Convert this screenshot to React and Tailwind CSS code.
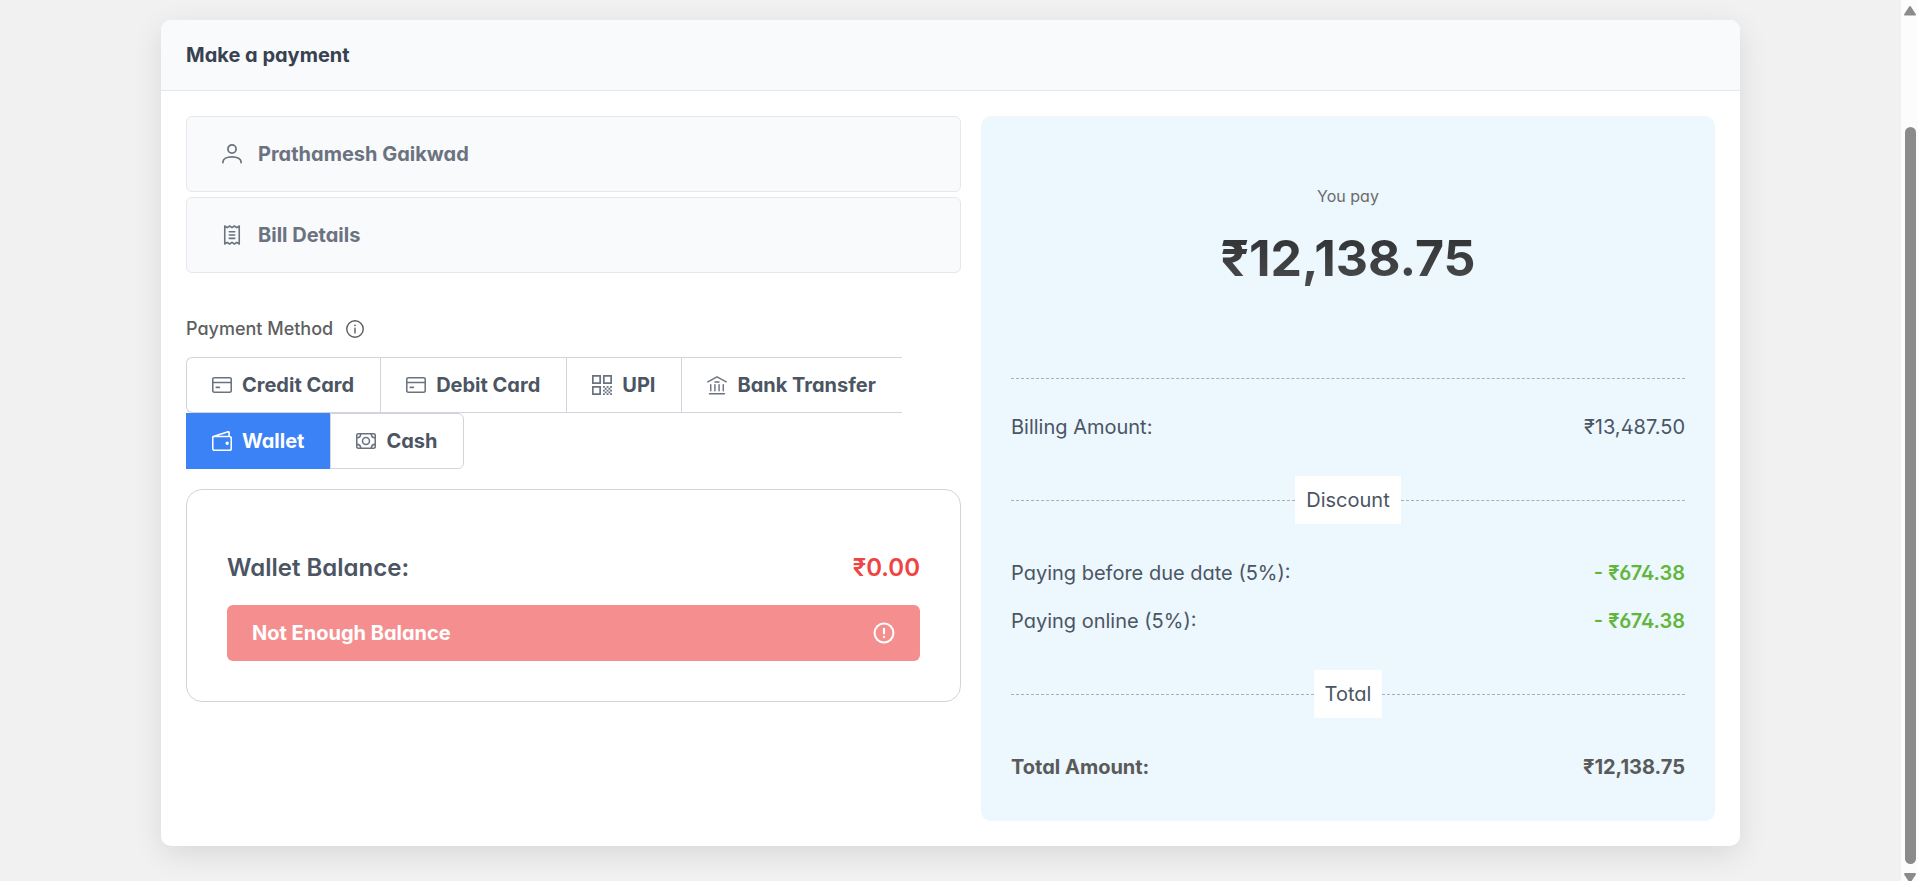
import React, { useState } from 'react';

function Icon({ children, className = '' }) {
  return (
    <svg
      viewBox="0 0 24 24"
      fill="none"
      stroke="currentColor"
      strokeWidth="1.9"
      strokeLinecap="round"
      strokeLinejoin="round"
      aria-hidden="true"
      className={'shrink-0 ' + className}
    >
      {children}
    </svg>
  );
}

function UserIcon() {
  return (
    <Icon className="size-5">
      <circle cx="12" cy="6" r="4.900" strokeWidth="2.100" />
      <path d="M1.100 22.300v-.8C1.100 17.800 5.500 15.300 12 15.300s10.900 2.500 10.900 6.200v.8" strokeWidth="2.100" />
    </Icon>
  );
}

function ReceiptIcon() {
  return (
    <Icon className="size-5">
      <path d="M3.300 1.200v21.600l2.900-2 2.900 2 2.900-2 2.900 2 2.900-2 2.900 2V1.200l-2.900 2-2.900-2-2.900 2-2.900-2-2.900 2z" />
      <path d="M8.700 8h6.600M8.700 12h6.600M8.700 16h6.600" />
    </Icon>
  );
}

function InfoIcon() {
  return (
    <Icon className="size-[18px]">
      <circle cx="12" cy="12" r="11" />
      <path d="M12 10.800v6.400" />
      <path d="M12 7v.4" strokeWidth="2.200" />
    </Icon>
  );
}

function CardIcon() {
  return (
    <Icon className="size-5">
      <rect x="0.900" y="3.300" width="22.200" height="17.400" rx="1.800" />
      <path d="M1 8.900h22M5 14.800h4" />
    </Icon>
  );
}

function QrIcon() {
  return (
    <Icon className="size-5">
      <path
        strokeWidth="2.100"
        strokeLinejoin="miter"
        d="M1 1h8.800v8.800H1zM14.200 1H23v8.800h-8.800zM1 14.200h8.800V23H1z"
      />
      <path
        stroke="none"
        fill="currentColor"
        d="M13.200 13.200h2.200v2.200h-2.200zM17.600 13.200h2.200v2.200h-2.200zM21.800 13.200H24v2.200h-2.200zM15.400 15.400h2.200v2.200h-2.200zM19.800 15.400h2.200v2.200h-2.200zM13.200 17.600h2.200v2.200h-2.200zM17.600 17.600h2.200v2.200h-2.200zM21.800 17.600H24v2.200h-2.200zM15.400 19.800h2.200V22h-2.200zM19.800 19.800h2.200V22h-2.200zM13.200 21.800h2.200V24h-2.200zM17.600 21.800h2.200V24h-2.200zM21.800 21.800H24V24h-2.200z"
      />
    </Icon>
  );
}

function BankIcon() {
  return (
    <Icon className="size-5">
      <path d="M.9 8.200L12 2.200l11.100 6M3 22.400h18M9.600 8.400h4.800" strokeWidth="1.700" />
      <path d="M4.500 11.500v7.500M9.500 11.500v7.500M14.500 11.500v7.500M19.500 11.500v7.500" strokeWidth="1.700" />
    </Icon>
  );
}

function WalletIcon() {
  return (
    <Icon className="size-5">
      <path d="M1.500 6.500L19.300.9c.6-.2 1.200.2 1.200.8v4.800M2.500 6.500h18.400c1.200 0 2.200.9 2.200 2.100v12.500c0 1.200-1 2.100-2.200 2.100H3.100c-1.200 0-2.200-.9-2.200-2.100V7.500c0-.6.600-1 1.600-1z" />
      <circle cx="18.200" cy="14.600" r="1.100" fill="currentColor" />
    </Icon>
  );
}

function CashIcon() {
  return (
    <Icon className="size-5">
      <rect x="0.900" y="3.300" width="22.200" height="17.400" rx="1.800" />
      <circle cx="12" cy="12" r="4.200" />
      <path d="M5.600 3.500c0 2.600-1.800 4.500-4.500 4.500M18.400 3.500c0 2.600 1.800 4.500 4.500 4.500M5.600 20.500c0-2.600-1.800-4.500-4.500-4.500M18.400 20.500c0-2.600 1.800-4.500 4.500-4.500" />
    </Icon>
  );
}

function AlertIcon() {
  return (
    <Icon className="size-[22px]">
      <circle cx="12" cy="12" r="10.300" strokeWidth="2.200" />
      <path d="M12 7.500v4.800M12 16.200v.2" strokeWidth="2.400" />
    </Icon>
  );
}

const METHODS = [
  [
    { name: 'Credit Card', icon: CardIcon },
    { name: 'Debit Card', icon: CardIcon },
    { name: 'UPI', icon: QrIcon },
    { name: 'Bank Transfer', icon: BankIcon },
  ],
  [
    { name: 'Wallet', icon: WalletIcon },
    { name: 'Cash', icon: CashIcon },
  ],
];

function AccordionHeader({ icon: Glyph, children }) {
  return (
    <button
      type="button"
      aria-expanded="false"
      className="flex h-[76px] w-full items-center gap-4 rounded-md border border-[#e5e7eb] bg-[#f9fafb] px-[35px] text-left font-bold text-[#6b7280]"
    >
      <Glyph />
      {children}
    </button>
  );
}

function MethodButton({ name, icon: Glyph, selected, first, last, onSelect }) {
  const tone = selected
    ? 'border-[#3b82f6] bg-[#3b82f6] text-white'
    : 'border-[#d1d5db] bg-white text-[#4b5563]';
  const shape = (first ? 'rounded-l-md ' : '') + (last ? 'rounded-r-md border-r pr-[25px]' : 'pr-[26px]');
  return (
    <button
      type="button"
      aria-pressed={selected}
      onClick={onSelect}
      className={'flex h-14 items-center gap-[10px] border-y border-l pl-[25px] font-bold ' + tone + ' ' + shape}
    >
      <span className={selected ? 'text-white' : 'text-[#6b7280]'}>
        <Glyph />
      </span>
      {name}
    </button>
  );
}

function AmountRow({ label, value, className = '', valueClass = '' }) {
  return (
    <div className={'flex h-12 items-center justify-between ' + className}>
      <span>{label}</span>
      <span className={valueClass}>{value}</span>
    </div>
  );
}

function Divider({ children }) {
  return (
    <div className="my-[25px] flex items-center">
      <span className="flex-1 border-t border-dashed border-[#abafb4]" />
      <span className="flex h-12 items-center bg-white px-[11px]">{children}</span>
      <span className="flex-1 border-t border-dashed border-[#abafb4]" />
    </div>
  );
}

function ScrollRail() {
  return (
    <div aria-hidden="true" className="sticky top-0 flex h-screen w-[17px] shrink-0 flex-col items-center justify-between bg-[#fcfcfc] pt-1.5 pl-px text-[#8b8b8b]">
      <svg viewBox="0 0 12 10" className="h-[10px] w-3" fill="currentColor">
        <path d="M5 .7a1.300 1.300 0 0 1 2 0l4.700 7.200c.5.900.1 1.700-.8 1.700H1.100c-.9 0-1.300-.8-.8-1.700z" />
      </svg>
      <div className="mt-[111px] mb-[9px] w-[11px] flex-1 rounded-full bg-[#8b8b8b]" />
      <svg viewBox="0 0 12 8" className="h-2 w-3" fill="currentColor">
        <path d="M1.100 0h9.800c.9 0 1.300.8.8 1.700L7.600 8H4.400L.3 1.700C-.2.800.2 0 1.100 0z" />
      </svg>
    </div>
  );
}

export default function App() {
  const [method, setMethod] = useState('Wallet');

  return (
    <div className="flex min-h-screen bg-[#f1f1f1] font-[Inter,sans-serif] text-xl text-[#4b5563] [font-feature-settings:'cv02','cv03','cv04','cv11']">
      <main className="min-w-0 flex-1 px-[161px] py-5">
        <section className="overflow-hidden rounded-[10px] bg-white shadow-[0_8px_30px_rgba(0,0,0,0.1)]">
          <header className="flex h-[71px] items-center border-b border-[#e5e7eb] bg-[#f9fafb] px-[25px]">
            <h1 className="font-bold text-[#374151]">Make a payment</h1>
          </header>

          <div className="grid grid-cols-[775fr_734fr] gap-5 p-[25px]">
            <div className="min-w-0">
              <div className="flex flex-col gap-[5px]">
                <AccordionHeader icon={UserIcon}>Prathamesh Gaikwad</AccordionHeader>
                <AccordionHeader icon={ReceiptIcon}>Bill Details</AccordionHeader>
              </div>

              <div className="mt-10 flex h-8 items-center gap-[13px] text-lg font-medium text-[#5f5f5f]">
                <h2 id="payment-method">Payment Method</h2>
                <InfoIcon />
              </div>

              <div role="group" aria-labelledby="payment-method" className="mt-3">
                {METHODS.map((row, r) => (
                  <div key={r} className="flex">
                    {row.map((m, i) => (
                      <MethodButton
                        key={m.name}
                        name={m.name}
                        icon={m.icon}
                        first={r === 0 && i === 0}
                        last={r === 1 && i === row.length - 1}
                        selected={method === m.name}
                        onSelect={() => setMethod(m.name)}
                      />
                    ))}
                  </div>
                ))}
              </div>

              <div className="mt-5 rounded-2xl border border-[#d1d5db] p-10">
                <div className="flex h-[75px] items-center justify-between text-2xl font-semibold">
                  <span>Wallet Balance:</span>
                  <span className="text-[#ef4444]">₹0.00</span>
                </div>
                <button
                  type="button"
                  disabled
                  className="flex h-14 w-full items-center justify-between rounded-md bg-[#f58f8f] px-[25px] font-bold text-white"
                >
                  Not Enough Balance
                  <AlertIcon />
                </button>
              </div>
            </div>

            <div className="min-w-0 rounded-[10px] bg-[#ecf7fe] px-[30px] pb-[30px]">
              <div className="flex flex-col items-center pt-[68px] pb-[58px]">
                <p className="text-base text-[#6b6b6b]">You pay</p>
                <p className="mt-3 bg-linear-to-b from-[#2a2c2d] to-[#505052] bg-clip-text text-[50px] leading-[76px] font-bold text-transparent">
                  ₹12,138.75
                </p>
              </div>
              <hr className="my-6 border-t border-dashed border-[#abafb4]" />
              <AmountRow label="Billing Amount:" value="₹13,487.50" />
              <Divider>Discount</Divider>
              <AmountRow label="Paying before due date (5%):" value="- ₹674.38" valueClass="font-semibold text-[#62b63a]" />
              <AmountRow label="Paying online (5%):" value="- ₹674.38" valueClass="font-semibold text-[#62b63a]" />
              <Divider>Total</Divider>
              <AmountRow label="Total Amount:" value="₹12,138.75" className="font-bold text-[#5a5a5a]" />
            </div>
          </div>
        </section>
      </main>
      <ScrollRail />
    </div>
  );
}
